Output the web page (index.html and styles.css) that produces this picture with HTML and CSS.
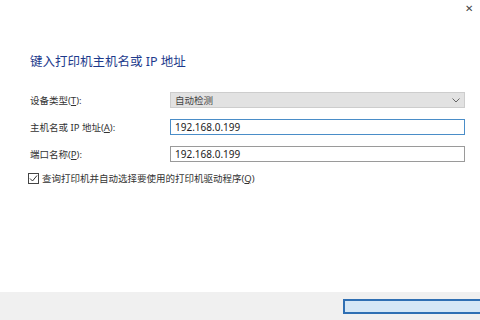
FILE: index.html
```html
<!DOCTYPE html>
<html lang="zh-CN">
<head>
  <meta charset="UTF-8" />
  <title>添加打印机</title>
  <link rel="stylesheet" href="styles.css">
</head>
<body>

<div class="dialog">
  <div class="titlebar">
    <span class="close">&#x2715;</span>
  </div>

  <div class="content">
    <h1>键入打印机主机名或 IP 地址</h1>

    <div class="form">
      <label>设备类型(<u>T</u>):</label>
      <div class="select">
        <span>自动检测</span>
        <svg width="8" height="5" viewBox="0 0 8 5"><path d="M0.5 0.5 L4 4 L7.5 0.5" fill="none" stroke="#666" stroke-width="1"/></svg>
      </div>

      <label>主机名或 IP 地址(<u>A</u>):</label>
      <div class="field focused">192.168.0.199</div>

      <label>端口名称(<u>P</u>):</label>
      <div class="field">192.168.0.199</div>
    </div>

    <div class="check">
      <span class="box">
        <svg width="9" height="9" viewBox="0 0 9 9"><path d="M1 4.5 L3.5 7 L8 1.5" fill="none" stroke="#333" stroke-width="1"/></svg>
      </span>
      <span>查询打印机并自动选择要使用的打印机驱动程序(<u>Q</u>)</span>
    </div>
  </div>

  <div class="footer">
    <button class="primary"></button>
  </div>
</div>

</body>
</html>
```

FILE: styles.css
```css
* { box-sizing: border-box; }
body {
  margin: 0;
  width: 480px;
  height: 320px;
  overflow: hidden;
  background: #fff;
  font-family: "Noto Sans", "Noto Sans CJK SC", sans-serif;
  color: #333;
}
.dialog {
  display: flex;
  flex-direction: column;
  height: 320px;
}
.titlebar {
  height: 18px;
  display: flex;
  justify-content: flex-end;
  align-items: center;
  padding-right: 7px;
}
.close {
  font-size: 10px;
  line-height: 10px;
  color: #444;
  margin-top: -2px;
}
.content {
  flex: 1;
  padding: 0 15px 0 30px;
}
h1 {
  margin: 36px 0 0;
  font-size: 12.5px;
  line-height: 16px;
  font-weight: normal;
  color: #1d3a8c;
}
.form {
  display: grid;
  grid-template-columns: 140px 1fr;
  row-gap: 11px;
  align-items: center;
  margin-top: 22px;
  font-size: 9.5px;
}
.form label u, .check u { text-decoration: underline; }
.select, .field {
  height: 16px;
  display: flex;
  align-items: center;
  padding: 0 4px;
  font-size: 10px;
}
.select {
  justify-content: space-between;
  background: #e2e2e2;
  border: 1px solid #cdcdcd;
  color: #444;
  font-size: 9.5px;
}
.field {
  border: 1px solid #9a9a9a;
  color: #222;
}
.field.focused {
  border-color: #4a8dc8;
}
.check {
  display: flex;
  align-items: center;
  gap: 3px;
  margin-top: 9px;
  margin-left: -2px;
  font-size: 9.5px;
}
.box {
  width: 11px;
  height: 11px;
  border: 1px solid #444;
  display: flex;
  align-items: center;
  justify-content: center;
}
.footer {
  height: 28px;
  background: #f0f0f0;
  display: flex;
  align-items: center;
  padding-left: 343px;
}
.primary {
  width: 160px;
  height: 15px;
  flex: none;
  border: 2px solid #2f6fb3;
  background: #d5e7f6;
  padding: 0;
}
```
